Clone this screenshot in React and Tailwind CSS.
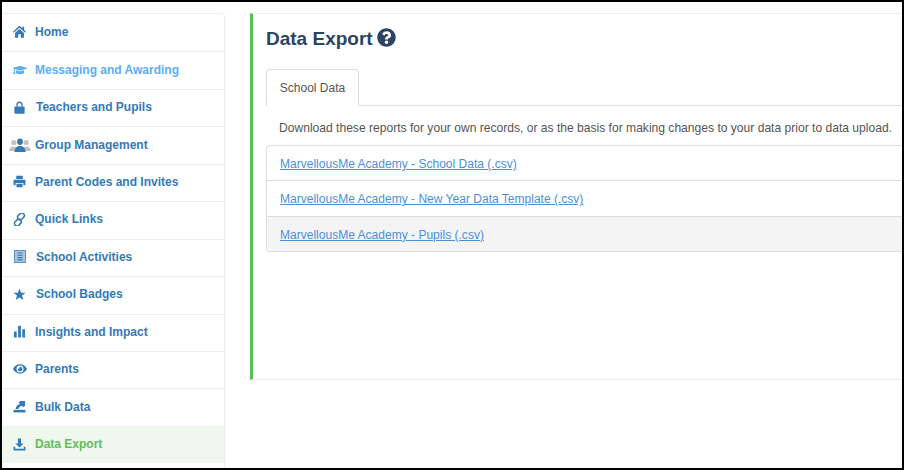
import { FaGraduationCap, FaQuestionCircle, FaEye } from 'react-icons/fa';

function Glyph({ children, className }) {
  return (
    <svg viewBox="0 0 14 14" className={className} fill="currentColor">
      {children}
    </svg>
  );
}

const HomeIcon = () => (
  <Glyph className="w-[13px] h-[13px]">
    <path d="M7 .8 10 3.6V1.8h2v3.7l2 1.9-.9 1L7 2.9.9 8.4 0 7.4z" />
    <path d="M7 4.2 11.8 8.6V13.6H8.4V10H5.6V13.6H2.2V8.6z" />
  </Glyph>
);

const LockIcon = () => (
  <Glyph className="w-[13px] h-[13px]">
    <path d="M3.5 6V4.2C3.5 2 5 .6 7 .6s3.500 1.400 3.500 3.600V6H9V4.300C9 3 8.200 2.200 7 2.200S5 3 5 4.300V6z" />
    <rect x="1.500" y="6" width="11" height="7.600" rx="0.800" />
  </Glyph>
);

const GroupIcon = () => (
  <svg viewBox="0 0 22 14" className="w-[22px] h-[14px]">
    <g fill="#c4c1bc">
      <circle cx="4.800" cy="4.500" r="2.600" />
      <path d="M0 13c0-3 2-4.500 4.800-4.500S9 10 9 13z" />
      <circle cx="17.200" cy="4.500" r="2.600" />
      <path d="M13 13c0-3 1.400-4.500 4.200-4.500S22 10 22 13z" />
    </g>
    <g fill="#337ab7">
      <ellipse cx="11" cy="3.800" rx="2.900" ry="3.300" />
      <path d="M5.500 14c0-3.800 2.500-5.500 4.300-6h2.400c1.800.5 4.300 2.200 4.300 6z" />
    </g>
  </svg>
);

const PrintIcon = () => (
  <Glyph className="w-[13px] h-[13px]">
    <path d="M3.500 .8h7v3.600h-7z" />
    <path d="M.6 5.200h12.800v5.800h-2.200V8.600H2.800V11H.6z" />
    <path d="M3.700 9.400h6.600v3.800H3.700z" />
  </Glyph>
);

const LinkIcon = () => (
  <svg viewBox="0 0 14 14" className="w-[13px] h-[13px]" fill="none" stroke="currentColor" strokeWidth="1.700">
    <rect x="5.900" y="-.4" width="5.400" height="8" rx="2.700" transform="rotate(45 8.600 3.600)" />
    <rect x="2.500" y="6.400" width="5.400" height="8" rx="2.700" transform="rotate(45 5.200 10.400)" />
  </svg>
);

const ListIcon = () => (
  <svg viewBox="0 0 12 13" className="w-[12px] h-[13px]">
    <rect x=".5" y=".5" width="11" height="12" fill="#a9c4dd" stroke="#5f93c3" />
    <path d="M3.500 3h5M3.500 5.300h5M3.500 7.600h5M3.500 9.900h5" stroke="#337ab7" strokeWidth="1.100" />
  </svg>
);

const StarIcon = () => (
  <svg viewBox="0 0 14 14" className="w-[13px] h-[13px]" fill="currentColor">
    <path d="M7 .6 8.700 5.200H13.600L9.700 8.200 11.100 13 7 10.100 2.900 13 4.300 8.200.4 5.200H5.300z" />
  </svg>
);

const BarsIcon = () => (
  <Glyph className="w-[13px] h-[13px]">
    <path d="M1 7h3v6.500H1zM5.500 .8h3v12.700h-3zM10 4.500h3v9h-3z" />
  </Glyph>
);

const ExportIcon = () => (
  <Glyph className="w-[13px] h-[13px]">
    <path d="M.6 10.600h12.800v2.800H.6z" />
    <path d="M2.800 9.800C3 6.800 5 4.800 7.600 4.300L6 2.700 7.800 1H13v5.200l-1.800 1.700-1.600-1.600C7.800 6.800 6.300 8 5.800 9.800z" />
  </Glyph>
);

const DownloadIcon = () => (
  <Glyph className="w-[13px] h-[13px]">
    <path d="M5.300.6h3.400v5.200h2.700L7 10.200 2.600 5.800h2.700z" />
    <path d="M.6 9.500h1.800v2.200h9.200V9.500h1.800v4H.6z" />
  </Glyph>
);

const navItems = [
  { label: 'Home', icon: <HomeIcon /> },
  { label: 'Messaging and Awarding', icon: <FaGraduationCap className="w-[14px] h-[14px]" />, light: true },
  { label: 'Teachers and Pupils', icon: <LockIcon />, pad: true },
  { label: 'Group Management', icon: <GroupIcon /> },
  { label: 'Parent Codes and Invites', icon: <PrintIcon /> },
  { label: 'Quick Links', icon: <LinkIcon /> },
  { label: 'School Activities', icon: <ListIcon />, pad: true },
  { label: 'School Badges', icon: <StarIcon />, pad: true },
  { label: 'Insights and Impact', icon: <BarsIcon /> },
  { label: 'Parents', icon: <FaEye className="w-[14px] h-[14px]" /> },
  { label: 'Bulk Data', icon: <ExportIcon /> },
  { label: 'Data Export', icon: <DownloadIcon />, active: true },
];

const reports = [
  'MarvellousMe Academy - School Data (.csv)',
  'MarvellousMe Academy - New Year Data Template (.csv)',
  'MarvellousMe Academy - Pupils (.csv)',
];

export default function App() {
  return (
    <div className="w-[904px] h-[470px] overflow-hidden bg-white border-2 border-black flex font-['Liberation_Sans',sans-serif]">
      <nav className="w-[223px] h-[456px] mt-[11px] shrink-0 flex flex-col bg-white border-t border-r border-[#eeeeee] rounded-tr-[4px]">
        {navItems.map((item, i) => (
          <div
            key={item.label}
            className={`h-[37.45px] pb-[2px] shrink-0 flex items-center text-[12px] font-bold border-[#eeeeee] ${i > 0 ? 'border-t' : ''} ${item.active ? 'bg-[#eff7ef] text-[#5fbf57]' : item.light ? 'text-[#5cadf5]' : 'text-[#337ab7]'}`}
          >
            <span className={`w-[31px] ml-[2px] flex justify-center shrink-0 ${item.active ? 'text-[#337ab7]' : ''}`}>{item.icon}</span>
            <span className={item.pad ? 'ml-[1px]' : ''}>{item.label}</span>
          </div>
        ))}
      </nav>

      <main className="ml-[25px] mt-[11px] h-[367px] flex-1 min-w-0 border-l-[3px] border-l-[#5fbf57] border-t border-b border-[#eeeeee]">
        <h1 className="ml-[13px] mt-[14px] h-[22px] flex items-center gap-[4px] text-[19px] font-bold leading-[22px] text-[#2c4463]">
          Data Export
          <FaQuestionCircle className="w-[19px] h-[19px] -mt-[3px]" />
        </h1>

        <div className="ml-[13px] mt-[19px] h-[37px] flex border-b border-[#dddddd]">
          <div className="w-[93px] h-[37px] flex items-center justify-center bg-white border border-b-0 border-[#dddddd] rounded-t-[4px] text-[12px] text-[#555555]">
            School Data
          </div>
        </div>

        <p className="ml-[26px] mt-[14px] text-[12.08px] leading-[16px] text-[#555555] whitespace-nowrap">
          Download these reports for your own records, or as the basis for making changes to your data prior to data upload.
        </p>

        <ul className="ml-[13px] mt-[9px] h-[107px] flex flex-col border border-r-0 border-[#dddddd] rounded-l-[4px] overflow-hidden">
          {reports.map((r, i) => (
            <li key={r} className={`flex-1 flex items-center pl-[13px] pt-[2px] text-[12.04px] ${i > 0 ? 'border-t border-[#dddddd]' : ''} ${i === 2 ? 'bg-[#f4f4f4]' : ''}`}>
              <a href="#" className="text-[#4a90d9] underline">{r}</a>
            </li>
          ))}
        </ul>
      </main>
    </div>
  );
}
